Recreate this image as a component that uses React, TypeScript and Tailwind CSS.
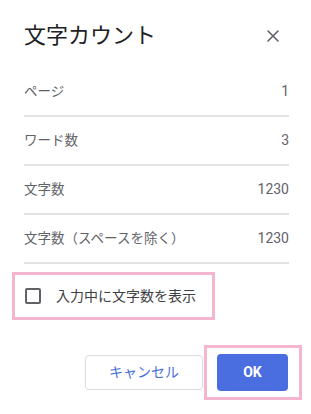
import { useState } from 'react'

type Row = {
  label: string
  value: string
}

const rows: Row[] = [
  { label: 'ページ', value: '1' },
  { label: 'ワード数', value: '3' },
  { label: '文字数', value: '1230' },
  { label: '文字数（スペースを除く）', value: '1230' },
]

function CloseIcon() {
  return (
    <svg width="12" height="12" viewBox="0 0 12 12" fill="none">
      <path d="M1 1L11 11M11 1L1 11" stroke="#5f6368" strokeWidth="1.6" strokeLinecap="round" />
    </svg>
  )
}

function App() {
  const [showWhileTyping, setShowWhileTyping] = useState(false)

  return (
    <div className="h-[414px] w-[311px] overflow-hidden bg-white font-['Roboto','Noto_Sans_CJK_JP',sans-serif]">
      <div className="pl-6 pr-[22px] pt-[22px]">
        <div className="flex h-[28px] items-center justify-between">
          <h1 className="text-[22px] leading-[28px] font-normal text-[#202124]">文字カウント</h1>
          <button className="mr-[4px] flex h-6 w-6 items-center justify-center">
            <CloseIcon />
          </button>
        </div>

        <div className="mt-[18px]">
          {rows.map((row) => (
            <div
              key={row.label}
              className="flex h-[49px] items-center justify-between border-b-2 border-[#e3e3e3] text-[13.5px] text-[#5f6368]"
            >
              <span>{row.label}</span>
              <span className="text-[14px]">{row.value}</span>
            </div>
          ))}
        </div>

        <label className="-ml-3 mt-[8px] flex h-[48px] w-[203px] cursor-pointer items-center border-[3px] border-[#f5b5cf] pl-[10px]">
          <input
            type="checkbox"
            className="sr-only"
            checked={showWhileTyping}
            onChange={(e) => setShowWhileTyping(e.target.checked)}
          />
          <span className="h-4 w-4 rounded-[2px] border-2 border-[#5f6368]" />
          <span className="ml-[15px] text-[14px] text-[#3c4043]">入力中に文字数を表示</span>
        </label>

        <div className="-mr-[13px] mt-[25px] flex items-center justify-end">
          <button className="mr-px h-[35px] w-[118px] rounded-[4px] border border-[#dadce0] text-[14px] text-[#4a6ee0]">
            キャンセル
          </button>
          <div className="border-[3px] border-[#f5b5cf] py-[6px] pl-[10px] pr-[11px]">
            <button className="h-[37px] w-[71px] rounded-[4px] bg-[#4a6ee0] text-[14px] font-bold text-white">
              OK
            </button>
          </div>
        </div>
      </div>
    </div>
  )
}

export default App
